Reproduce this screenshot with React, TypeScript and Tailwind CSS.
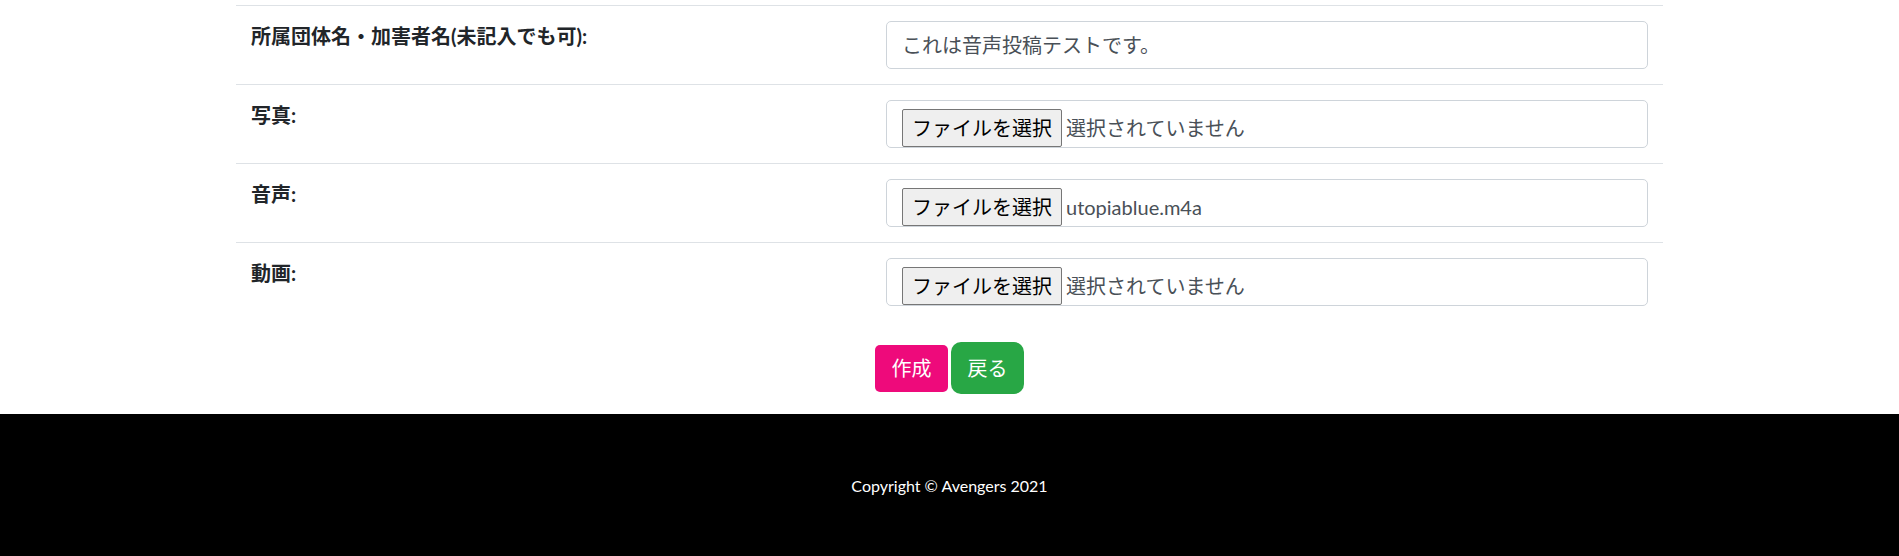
import React from 'react';

const rows = [
  { label: '所属団体名・加害者名(未記入でも可):', type: 'text', value: 'これは音声投稿テストです。' },
  { label: '写真:', type: 'file', value: '選択されていません' },
  { label: '音声:', type: 'file', value: 'utopiablue.m4a' },
  { label: '動画:', type: 'file', value: '選択されていません' },
];

const App: React.FC = () => {
  return (
    <div className="bg-white min-h-screen font-['Lato','Noto_Sans_CJK_JP',sans-serif] text-[#212529]">
      {/* Form table */}
      <div className="w-[1427px] mx-auto pt-[5px]">
        {rows.map((row, index) => (
          <div key={index} className="flex border-t border-[#dee2e6]">
            <div className="w-[635px] flex-shrink-0 p-[15px]">
              <span className="text-[20px] leading-[30px] font-bold">{row.label}</span>
            </div>
            <div className="flex-1 p-[15px]">
              {row.type === 'text' ? (
                <div className="h-[48px] border border-[#ced4da] rounded-[5px] px-[15px] flex items-center text-[20px] text-[#495057] font-['Noto_Sans_CJK_JP',sans-serif]">
                  {row.value}
                </div>
              ) : (
                <div className="h-[48px] border border-[#ced4da] rounded-[5px] px-[15px] pt-[8px] flex items-start overflow-hidden">
                  <span className="h-[38px] px-[9px] flex items-center bg-[#efefef] border border-[#767676] rounded-[2px] text-[20px] text-black font-['Noto_Sans_CJK_JP',sans-serif] leading-none">
                    ファイルを選択
                  </span>
                  <span className="ml-[4px] h-[38px] flex items-center text-[20px] text-[#495057]">
                    {row.value}
                  </span>
                </div>
              )}
            </div>
          </div>
        ))}
      </div>

      {/* Buttons */}
      <div className="flex justify-center items-center gap-[3px] pt-[21px] pb-[20px]">
        <button className="w-[73px] h-[47px] rounded-[5px] bg-[#ee0a7b] text-white text-[20px]">作成</button>
        <button className="w-[73px] h-[52px] rounded-[10px] bg-[#28a745] text-white text-[20px]">戻る</button>
      </div>

      {/* Footer */}
      <footer className="bg-black py-[60px] text-center">
        <p className="text-white text-[16px] leading-[24px]">Copyright © Avengers 2021</p>
      </footer>
    </div>
  );
};

export default App;
